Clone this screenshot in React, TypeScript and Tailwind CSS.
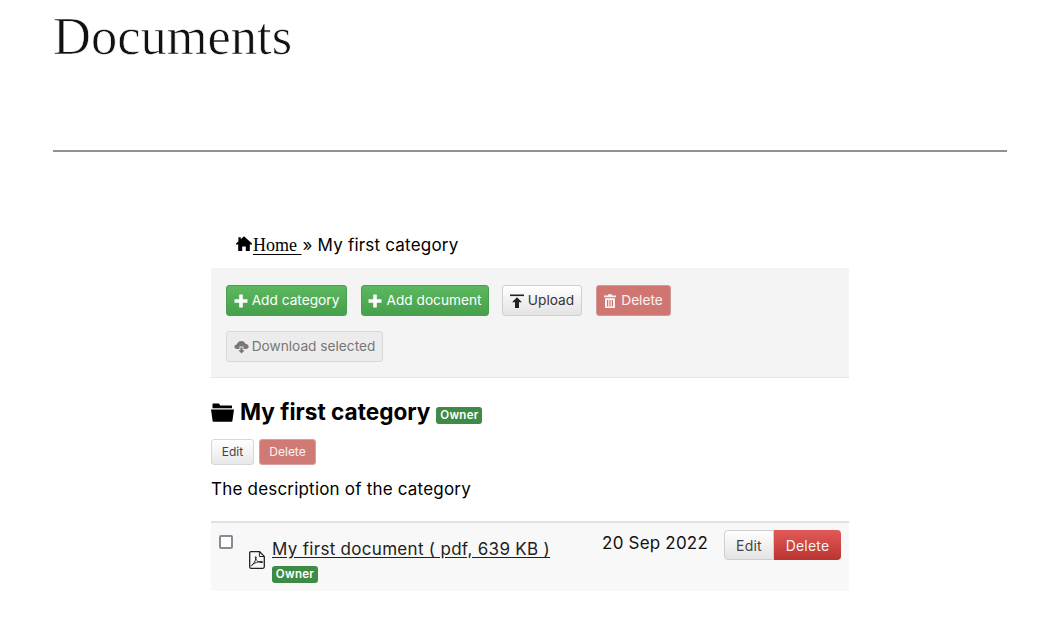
const sans = "font-['Inter','Liberation_Sans',sans-serif]";

function PlusIcon() {
  return (
    <svg viewBox="0 0 14 14" className="h-[14px] w-[14px] shrink-0 fill-white">
      <path d="M5.2 0.5h3.6v4.7h4.7v3.6H8.8v4.7H5.2V8.8H0.5V5.2h4.7z" />
    </svg>
  );
}

function HomeIcon() {
  return (
    <svg viewBox="0 0 16 15" className="mt-[3px] h-[15px] w-[16px] shrink-0 fill-black">
      <path d="M8 0.2 L16 7.6 L16 8.6 L13.8 8.6 L13.8 15 L9.8 15 L9.8 10.4 L6.2 10.4 L6.2 15 L2.2 15 L2.2 8.6 L0 8.6 L0 7.6 L2.4 5.4 L2.4 1.2 L4.8 1.2 L4.8 3.2 Z" />
    </svg>
  );
}

function UploadIcon() {
  return (
    <svg viewBox="0 0 14 14" className="h-[14px] w-[14px] shrink-0 fill-[#222]">
      <path d="M0 0.5h14v1.6H0z" />
      <path d="M7 3.2 L12 8.2 L9 8.2 L9 14 L5 14 L5 8.2 L2 8.2 Z" />
    </svg>
  );
}

function TrashIcon() {
  return (
    <svg viewBox="0 0 12 14" className="h-[14px] w-[12px] shrink-0 fill-white/90">
      <path d="M4.2 0.3h3.6l0.6 1.3H12v1.6H0V1.6h3.6z" />
      <path fillRule="evenodd" d="M1 4.3h10V14H1z M3 6v6.4h1.2V6z M5.4 6v6.4h1.2V6z M7.8 6v6.4H9V6z" />
    </svg>
  );
}

function CloudDownIcon() {
  return (
    <svg viewBox="0 0 16 14" className="h-[14px] w-[15px] shrink-0 fill-[#777]">
      <path d="M8 0.5C10 0.5 11.6 1.8 12 3.6C14 3.7 15.6 5 15.6 6.6C15.6 8.2 14.2 9 12.6 9H10.2V6.4H5.8V9H3.2C1.6 9 0.4 8.1 0.4 6.7C0.4 5.4 1.5 4.4 3 4.3C3.3 2.2 5.5 0.5 8 0.5Z" />
      <path d="M6.8 7.4h2.4v3h2.2L8 14L4.6 10.4h2.2z" />
    </svg>
  );
}

function FolderIcon() {
  return (
    <svg viewBox="0 0 23 19" className="h-[19px] w-[23px] shrink-0 fill-black">
      <path d="M1.5 3 L1.5 1.2 Q1.5 0.6 2.1 0.6 L8 0.6 L9.2 2.4 L20.5 2.4 Q21 2.4 21 3 L21 5.2 L1.5 5.2 Z" />
      <path d="M0 6.4 L23 6.4 L21.4 18 C21.3 18.6 21 18.8 20.5 18.8 L2.5 18.8 C2 18.8 1.7 18.6 1.6 18 Z" />
    </svg>
  );
}

function PdfIcon() {
  return (
    <svg viewBox="0 0 16 18" className="h-[18px] w-[16px] shrink-0 fill-none stroke-[#222]">
      <path strokeWidth="1.3" d="M1.9 0.7H10.6L15.3 5.4V15.8C15.3 16.6 14.7 17.3 13.9 17.3H1.9C1.2 17.3 0.7 16.6 0.7 15.8V1.9C0.7 1.2 1.2 0.7 1.9 0.7Z" />
      <path strokeWidth="1" d="M10.4 0.9V5.5H15" />
      <path strokeWidth="1" d="M2.4 14.8C4.2 13.8 6.6 9.8 7.2 6.6C7.4 5.4 6.4 5.2 6.3 6.2C6.1 8.6 9.6 11.8 13.2 11.6C14.2 11.4 13.8 10.4 12.8 10.4C9.8 10.4 5.2 11.8 3 13.8C2.4 14.4 2.2 14.8 2.4 14.8Z" />
    </svg>
  );
}

function OwnerBadge() {
  return (
    <span className="inline-flex h-[17px] w-[46px] items-center justify-center rounded-[3px] bg-[#3f8a45] text-[11.5px] font-semibold tracking-[0.3px] text-white">
      Owner
    </span>
  );
}

export default function App() {
  return (
    <div className={`${sans} h-[628px] overflow-hidden bg-white text-black`}>
      <div className="px-[53px]">
        <h1 className="h-[150px] pt-[5px] font-['Liberation_Serif',serif] text-[52.5px] leading-[62px] font-normal text-[#111] [-webkit-text-stroke:0.7px_white]">
          Documents
        </h1>
        <hr className="border-t-2 border-[#919191]" />
      </div>

      <div className="mx-auto mt-[81px] w-[638px]">
        <div className="flex h-[35px] items-start pl-[25px] text-[17px] leading-[25px] tracking-[0.2px]">
          <HomeIcon />
          <a className="ml-px font-['Liberation_Serif',serif] text-[18px] tracking-normal whitespace-pre underline underline-offset-[3px]" href="#">
            {"Home "}
          </a>
          <span className="ml-px whitespace-pre">» My first category</span>
        </div>

        <div className="h-[110px] border-b border-[#e6e6e6] bg-[#f4f4f4] px-[15px] pt-[17px] text-[13.7px]">
          <div className="flex gap-[14px]">
            <button className="flex h-[31px] w-[121px] items-center justify-center gap-[4px] rounded-[3px] border border-[#4a9f50] bg-gradient-to-b from-[#5cb85f] to-[#46a04c] text-white">
              <PlusIcon />
              Add category
            </button>
            <button className="mr-[-1px] flex h-[31px] w-[128px] items-center justify-center gap-[4px] rounded-[3px] border border-[#4a9f50] bg-gradient-to-b from-[#5cb85f] to-[#46a04c] text-white">
              <PlusIcon />
              Add document
            </button>
            <button className="flex h-[31px] w-[80px] items-center justify-center gap-[4px] rounded-[3px] border border-[#cfcfcf] bg-gradient-to-b from-white to-[#e3e3e3] text-[#333]">
              <UploadIcon />
              Upload
            </button>
            <button className="flex h-[31px] w-[75px] items-center justify-center gap-[5px] rounded-[3px] border border-[#d29a97] bg-[#d07672] text-white/90">
              <TrashIcon />
              Delete
            </button>
          </div>
          <button className="mt-[15px] flex h-[31px] w-[157px] items-center justify-center gap-[3px] rounded-[3px] border border-[#d8d8d8] bg-[#ececec] text-[#777]">
            <CloudDownIcon />
            Download selected
          </button>
        </div>

        <div className="mt-[20px] flex h-[28px] items-center gap-[6px]">
          <FolderIcon />
          <h2 className="text-[22.6px] leading-[28px] font-bold">My first category</h2>
          <span className="mt-[7px] flex">
            <OwnerBadge />
          </span>
        </div>

        <div className="mt-[13px] flex gap-[5px] text-[12px]">
          <button className="h-[26px] w-[43px] rounded-[3px] border border-[#d6d6d6] bg-gradient-to-b from-white to-[#e8e8e8] text-[#444]">
            Edit
          </button>
          <button className="h-[26px] w-[57px] rounded-[3px] border border-[#d9a09d] bg-[#d07a76] text-white/90">
            Delete
          </button>
        </div>

        <p className="mt-[12px] text-[17px] leading-[25px] tracking-[0.2px]">The description of the category</p>

        <div className="mt-[19px] flex h-[70px] border-t-2 border-[#e2e2e2] bg-[#f8f8f8]">
          <div className="ml-[8px] mt-[12px] h-[14px] w-[14px] rounded-[2px] border-2 border-[#8a8a96] bg-white" />
          <div className="ml-[16px] mt-[28px]">
            <PdfIcon />
          </div>
          <div className="ml-[7px] mt-[14px] flex flex-col items-start gap-[4px]">
            <a href="#" className="text-[17px] leading-[25px] tracking-[0.3px] text-[#222] underline underline-offset-2">
              My first document ( pdf, 639 KB )
            </a>
            <OwnerBadge />
          </div>
          <span className="ml-auto mt-[8px] text-[17px] leading-[25px] tracking-[0.2px] text-[#111]">20 Sep 2022</span>
          <div className="mr-[8px] ml-[16px] mt-[7px] flex h-[30px] text-[14px] tracking-[0.2px]">
            <button className="w-[50px] rounded-l-[4px] border border-[#cfcfcf] bg-gradient-to-b from-white to-[#e3e3e3] text-[#444]">
              Edit
            </button>
            <button className="w-[67px] rounded-r-[4px] bg-gradient-to-b from-[#e25a57] to-[#b93330] text-white/95">
              Delete
            </button>
          </div>
        </div>
      </div>
    </div>
  );
}
